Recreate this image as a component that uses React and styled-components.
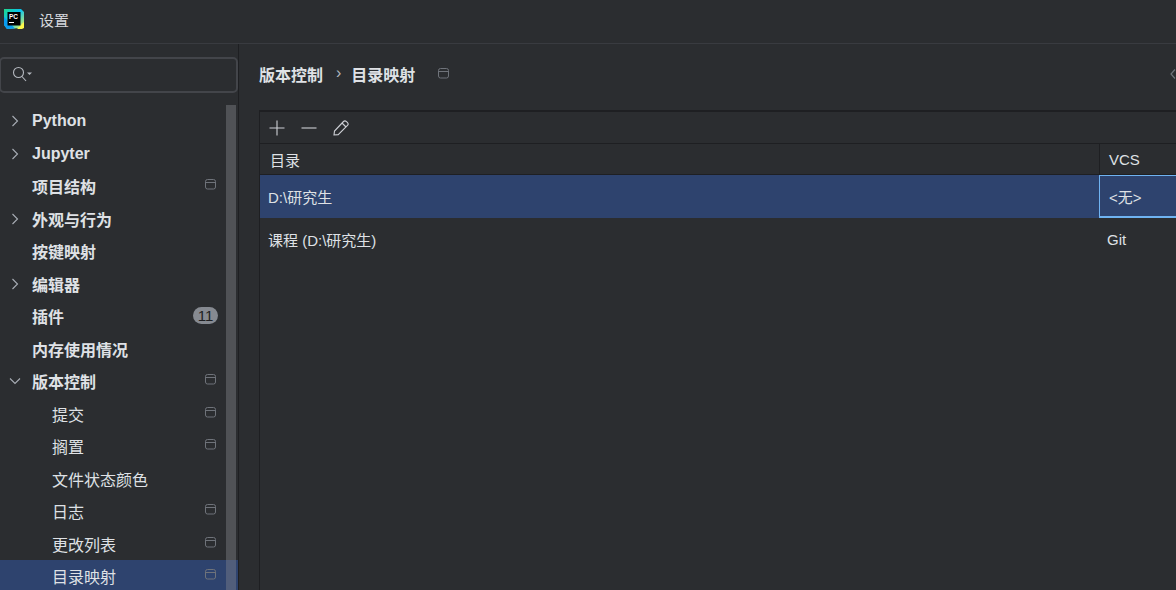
import styled, { createGlobalStyle } from "styled-components"

const GlobalStyle = createGlobalStyle`
    html, body {
        margin: 0;
        height: 100%;
        background: #2b2d30;
        overflow: hidden;
    }
    #root {
        height: 100%;
    }
`

const treeItems = [
    { label: "Python", arrow: "right" },
    { label: "Jupyter", arrow: "right" },
    { label: "项目结构", scope: true },
    { label: "外观与行为", arrow: "right" },
    { label: "按键映射" },
    { label: "编辑器", arrow: "right" },
    { label: "插件", badge: "11" },
    { label: "内存使用情况" },
    { label: "版本控制", arrow: "down", scope: true },
    { label: "提交", child: true, scope: true },
    { label: "搁置", child: true, scope: true },
    { label: "文件状态颜色", child: true },
    { label: "日志", child: true, scope: true },
    { label: "更改列表", child: true, scope: true },
    { label: "目录映射", child: true, scope: true, selected: true },
]

function ScopeIcon() {
    return (
        <svg width="11" height="11" viewBox="0 0 11 11" fill="none" stroke="#6f737a">
            <rect x="0.5" y="0.5" width="10" height="9.5" rx="2" />
            <path d="M0.5 3.5H10.5" />
        </svg>
    )
}

function Arrow({ down }) {
    return (
        <svg width="12" height="12" viewBox="0 0 12 12" fill="none" stroke="#a8adb5" strokeWidth="1.1">
            {down ? <path d="M1 3.5L6 8.5L11 3.5" /> : <path d="M3.5 1L8.5 6L3.5 11" />}
        </svg>
    )
}

function Logo() {
    return (
        <svg width="20" height="20" viewBox="0 0 20 20">
            <defs>
                <linearGradient id="pcGrad" x1="0" y1="0" x2="1" y2="1">
                    <stop offset="0" stopColor="#21d789" />
                    <stop offset="0.45" stopColor="#07c3f2" />
                    <stop offset="1" stopColor="#fcf84a" />
                </linearGradient>
            </defs>
            <path d="M0 0H17L20 3V14L16 19L3 20L0 16Z" fill="url(#pcGrad)" />
            <path d="M0 8V16L3 20L11 19.5Z" fill="#0a9cf0" />
            <path d="M13 20L20 13V19L18 20Z" fill="#fcf84a" />
            <rect x="3.5" y="3" width="13" height="13.5" fill="#000" />
            <text x="5" y="10" fontFamily="Liberation Sans, sans-serif" fontSize="6.5" fontWeight="700" fill="#fff">PC</text>
            <rect x="5" y="13" width="5" height="1" fill="#fff" />
        </svg>
    )
}

export default function App() {
    return (
        <Page>
            <GlobalStyle />
            <TitleBar>
                <LogoBox><Logo /></LogoBox>
                <TitleText>设置</TitleText>
            </TitleBar>
            <Body>
                <Sidebar>
                    <SearchBox>
                        <svg width="20" height="18" viewBox="0 0 20 18" fill="none" stroke="#b4b8bf" strokeWidth="1.1">
                            <circle cx="6.5" cy="6.5" r="5" />
                            <path d="M10 10.5L14 15" />
                            <path d="M15 6.5H20L17.5 9Z" fill="#b4b8bf" stroke="none" />
                        </svg>
                    </SearchBox>
                    <Tree>
                        {treeItems.map((item) => (
                            <TreeRow key={item.label} $selected={item.selected}>
                                <ArrowSlot>
                                    {item.arrow && <Arrow down={item.arrow === "down"} />}
                                </ArrowSlot>
                                <TreeLabel $child={item.child}>{item.label}</TreeLabel>
                                {item.scope && <ScopeSlot><ScopeIcon /></ScopeSlot>}
                                {item.badge && <Badge>{item.badge}</Badge>}
                            </TreeRow>
                        ))}
                        <ScrollThumb />
                    </Tree>
                </Sidebar>
                <Main>
                    <Breadcrumb>
                        <Crumb>版本控制</Crumb>
                        <CrumbSep>›</CrumbSep>
                        <Crumb>目录映射</Crumb>
                        <CrumbIcon><ScopeIcon /></CrumbIcon>
                        <BackArrow>
                            <svg width="6" height="10" viewBox="0 0 6 10" fill="none" stroke="#6f737a" strokeWidth="1.2">
                                <path d="M5 0.5L1 5L5 9.5" />
                            </svg>
                        </BackArrow>
                    </Breadcrumb>
                    <TablePanel>
                        <Toolbar>
                            <svg width="16" height="16" viewBox="0 0 16 16" fill="none" stroke="#ced0d6" strokeWidth="1.1">
                                <path d="M8 0.5V15.5M0.5 8H15.5" />
                            </svg>
                            <svg width="16" height="16" viewBox="0 0 16 16" fill="none" stroke="#ced0d6" strokeWidth="1.1">
                                <path d="M0.5 8H15.5" />
                            </svg>
                            <svg width="16" height="16" viewBox="0 0 16 16" fill="none" stroke="#ced0d6" strokeWidth="1.1">
                                <path d="M1 15L1.5 11L10.5 1.5C11.3 0.7 12.5 0.7 13.5 1.6L14.5 2.6C15.3 3.5 15.3 4.6 14.5 5.4L5.2 14.6Z" />
                                <path d="M9 3L13 7" />
                            </svg>
                        </Toolbar>
                        <HeaderRow>
                            <HeaderCell>目录</HeaderCell>
                            <HeaderCell $vcs>VCS</HeaderCell>
                        </HeaderRow>
                        <SelectedRow>
                            <DirCell>D:\研究生</DirCell>
                            <EditingCell>&lt;无&gt;</EditingCell>
                        </SelectedRow>
                        <PlainRow>
                            <DirCell>课程 (D:\研究生)</DirCell>
                            <VcsCell>Git</VcsCell>
                        </PlainRow>
                    </TablePanel>
                </Main>
            </Body>
        </Page>
    )
}

const fontStack = `"Liberation Sans", "Noto Sans CJK SC", sans-serif`

const Page = styled.div`
    width: 1176px;
    height: 590px;
    display: flex;
    flex-direction: column;
    overflow: hidden;
    background: #2b2d30;
    color: #dfe1e5;
    font-family: ${fontStack};
    font-size: 15px;
`

const TitleBar = styled.header`
    height: 43px;
    flex: none;
    display: flex;
    align-items: center;
    box-sizing: content-box;
    border-bottom: 1px solid #393b40;
`

const LogoBox = styled.div`
    width: 20px;
    height: 20px;
    margin: -5px 0 0 4px;
`

const TitleText = styled.span`
    margin: -5px 0 0 15px;
    font-size: 15px;
    color: #d5d7dc;
`

const Body = styled.div`
    flex: 1;
    min-height: 0;
    display: flex;
`

const Sidebar = styled.aside`
    width: 238px;
    flex: none;
    border-right: 1px solid #1e1f22;
    display: flex;
    flex-direction: column;
    overflow: hidden;
`

const SearchBox = styled.div`
    height: 32px;
    width: 227px;
    margin: 13px 0 0 -1px;
    flex: none;
    border: 2px solid #43454a;
    border-radius: 5px;
    display: flex;
    align-items: center;
    padding-left: 11px;
    box-sizing: content-box;
    width: 224px;
`

const Tree = styled.nav`
    position: relative;
    margin-top: 12px;
    flex: 1;
`

const TreeRow = styled.div`
    height: 32.5px;
    display: flex;
    align-items: center;
    padding-right: 21px;
    background: ${(props) => (props.$selected ? "#2e436e" : "transparent")};
`

const ArrowSlot = styled.span`
    width: 32px;
    flex: none;
    display: flex;
    padding-left: 9px;
    box-sizing: border-box;
`

const TreeLabel = styled.span`
    flex: 1;
    font-size: 16px;
    font-weight: ${(props) => (props.$child ? 400 : 700)};
    padding-left: ${(props) => (props.$child ? "20px" : "0")};
    color: #dfe1e5;
`

const ScopeSlot = styled.span`
    display: flex;
    margin-top: -3px;
    margin-right: 1px;
`

const Badge = styled.span`
    width: 25px;
    height: 17px;
    margin-right: -1px;
    border-radius: 9px;
    background: #868a91;
    color: #1e1f22;
    font-size: 15px;
    line-height: 17px;
    text-align: center;
    margin-top: -1px;
`

const ScrollThumb = styled.div`
    position: absolute;
    top: 0;
    right: 2px;
    bottom: 0;
    width: 10px;
    background: rgba(130, 133, 140, 0.42);
`

const Main = styled.main`
    flex: 1;
    min-width: 0;
    padding-left: 20px;
    display: flex;
    flex-direction: column;
`

const Breadcrumb = styled.div`
    height: 66px;
    flex: none;
    display: flex;
    align-items: center;
    padding-bottom: 6px;
    box-sizing: border-box;
`

const Crumb = styled.span`
    font-size: 16px;
    font-weight: 700;
`

const CrumbSep = styled.span`
    margin: -3px 10px 0 13px;
    font-size: 16px;
    color: #b4b8bf;
`

const CrumbIcon = styled.span`
    display: flex;
    margin: -2px 0 0 23px;
`

const BackArrow = styled.span`
    display: flex;
    margin-left: auto;
    margin-right: 0;
`

const TablePanel = styled.section`
    flex: 1;
    border-top: 2px solid #1e1f22;
    border-left: 1px solid #1e1f22;
`

const Toolbar = styled.div`
    height: 31px;
    display: flex;
    align-items: center;
    gap: 16px;
    padding-left: 9px;
    border-bottom: 1px solid #1e1f22;
`

const rowGrid = `
    display: grid;
    grid-template-columns: 839px 1fr;
`

const HeaderRow = styled.div`
    ${rowGrid}
    height: 30px;
    align-items: center;
    border-bottom: 1px solid #1e1f22;
`

const HeaderCell = styled.div`
    height: 100%;
    display: flex;
    align-items: center;
    padding-left: ${(props) => (props.$vcs ? "9px" : "10px")};
    border-left: ${(props) => (props.$vcs ? "1px solid #1e1f22" : "none")};
    font-size: 15px;
`

const SelectedRow = styled.div`
    ${rowGrid}
    height: 43px;
    background: #2e436e;
    align-items: center;
`

const PlainRow = styled.div`
    ${rowGrid}
    height: 43px;
    align-items: center;
`

const DirCell = styled.div`
    padding-left: 8px;
    font-size: 15px;
`

const VcsCell = styled.div`
    padding-left: 8px;
    font-size: 15px;
`

const EditingCell = styled.div`
    height: 100%;
    box-sizing: border-box;
    border: solid #6fb3f2;
    border-width: 1px 0 2px 1px;
    display: flex;
    align-items: center;
    padding-left: 9px;
    font-size: 15px;
`
